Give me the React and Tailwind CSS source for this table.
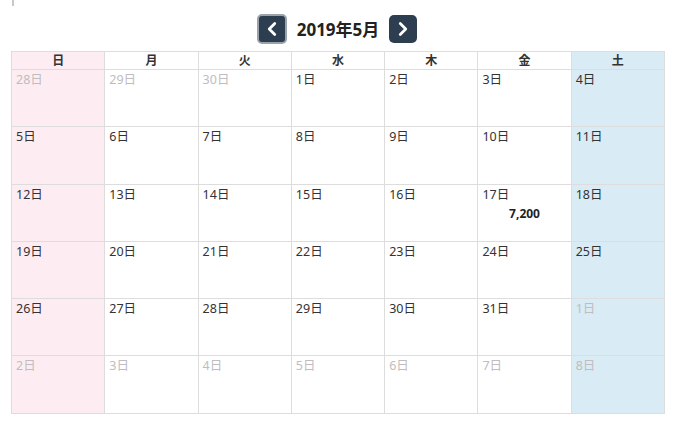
import { ChevronLeft, ChevronRight } from 'lucide-react';

const weekdays = ['日', '月', '火', '水', '木', '金', '土'];

// 2019年5月 calendar, 6 weeks
const weeks = [
  [[28, true], [29, true], [30, true], [1], [2], [3], [4]],
  [[5], [6], [7], [8], [9], [10], [11]],
  [[12], [13], [14], [15], [16], [17], [18]],
  [[19], [20], [21], [22], [23], [24], [25]],
  [[26], [27], [28], [29], [30], [31], [1, true]],
  [[2, true], [3, true], [4, true], [5, true], [6, true], [7, true], [8, true]],
];

const amounts = { 17: '7,200' };

function colBg(i) {
  if (i === 0) return 'bg-[#fdedf2]';
  if (i === 6) return 'bg-[#d9ecf6]';
  return 'bg-white';
}

export default function App() {
  return (
    <div className="w-[674px] h-[428px] bg-white text-[#333] font-['Noto_Sans','Noto_Sans_CJK_JP',sans-serif] overflow-hidden">
      <div className="ml-[12px] w-[2px] h-[6px] bg-[#c8c8c8]" />

      {/* Month header */}
      <div className="flex items-center justify-center gap-[9px] mt-[8px] h-[30px]">
        <button className="w-[30px] h-[30px] rounded-[5px] bg-[#2c3e50] border-2 border-[#9aa3ab] flex items-center justify-center text-white">
          <ChevronLeft size={22} strokeWidth={3} />
        </button>
        <div className="text-[17px] font-bold text-[#222] px-[1px] leading-none">2019年5月</div>
        <button className="w-[28px] h-[28px] rounded-[5px] bg-[#2c3e50] flex items-center justify-center text-white">
          <ChevronRight size={22} strokeWidth={3} />
        </button>
      </div>

      <table className="ml-[11px] mt-[7px] w-[654px] table-fixed border-collapse">
        <thead>
          <tr>
            {weekdays.map((d, i) => (
              <th
                key={d}
                className={`h-[18px] border border-[#ddd] text-[12px] font-bold leading-none p-0 ${colBg(i)}`}
              >
                {d}
              </th>
            ))}
          </tr>
        </thead>
        <tbody>
          {weeks.map((week, wi) => (
            <tr key={wi}>
              {week.map(([day, other], i) => (
                <td
                  key={i}
                  className={`h-[57.3px] border border-[#ddd] align-top px-[4px] pt-[2px] ${colBg(i)}`}
                >
                  <div className={`text-[12.5px] leading-[16px] ${other ? 'text-[#c0bcc0]' : 'text-[#333]'}`}>
                    {day}日
                  </div>
                  {!other && amounts[day] && (
                    <div className="text-center text-[12px] font-bold leading-[14px] mt-[4px] text-[#222]">
                      {amounts[day]}
                    </div>
                  )}
                </td>
              ))}
            </tr>
          ))}
        </tbody>
      </table>
    </div>
  );
}
